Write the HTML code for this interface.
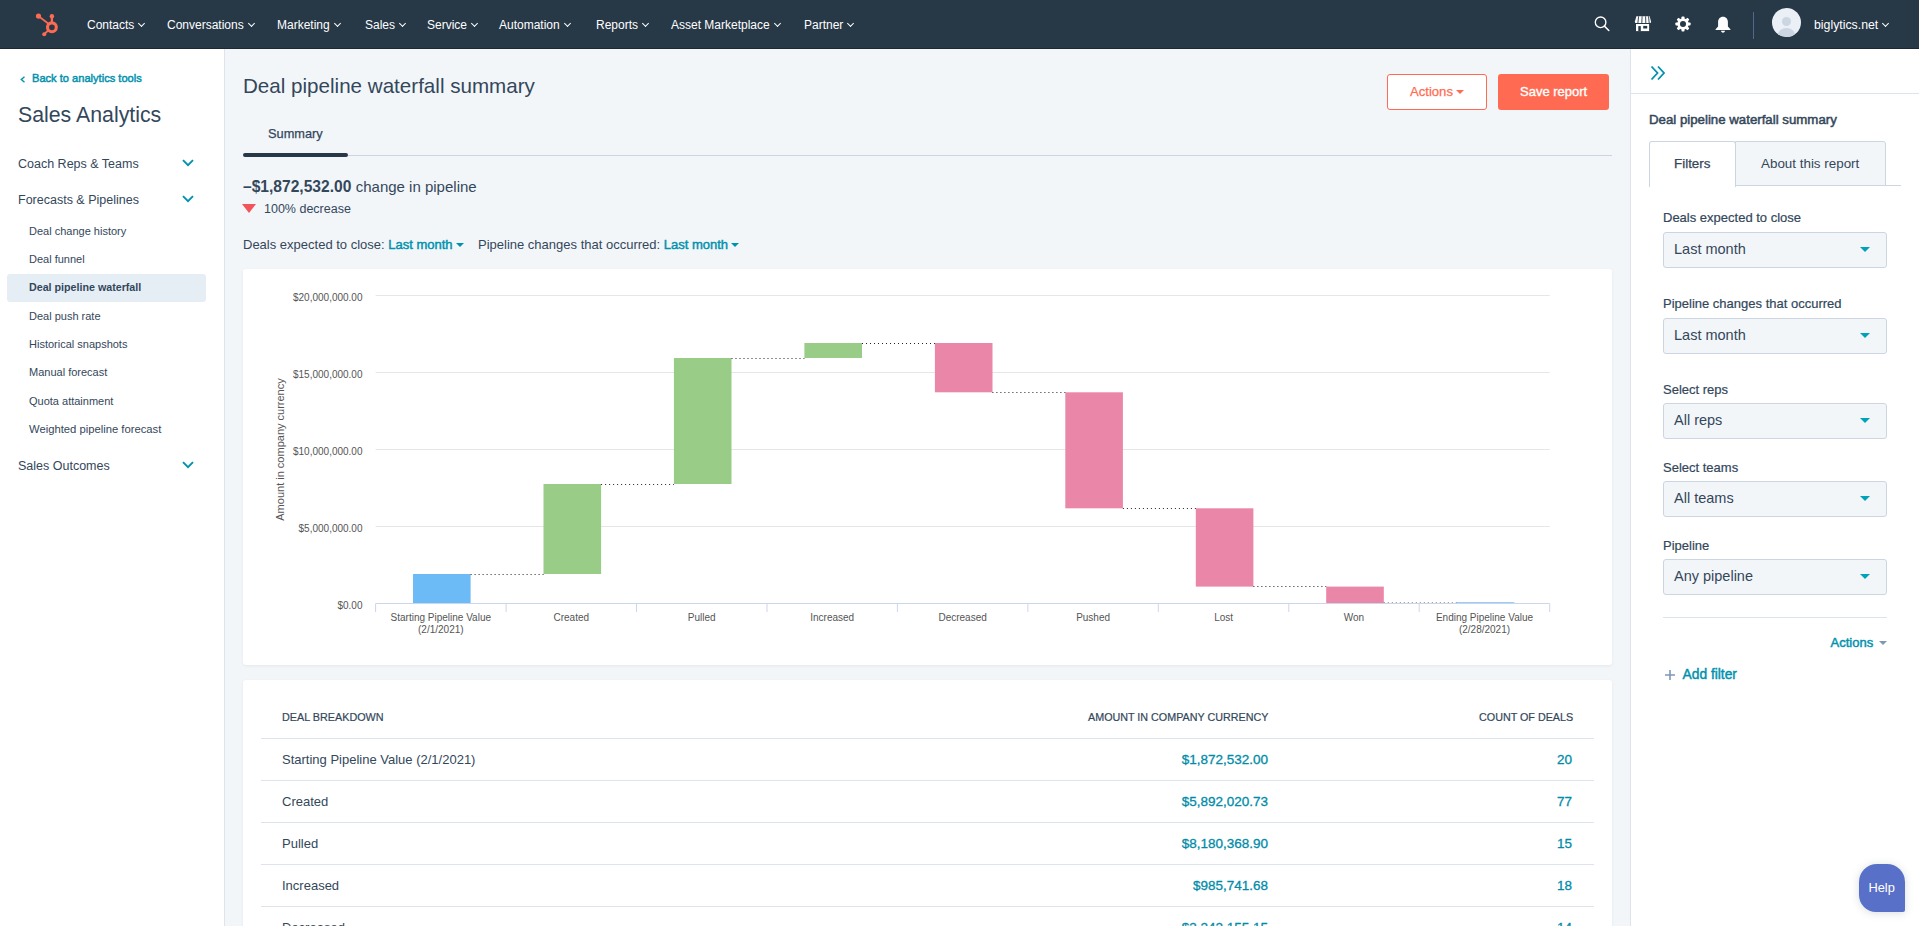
<!DOCTYPE html>
<html><head><meta charset="utf-8">
<style>
*{box-sizing:border-box;margin:0;padding:0}
html,body{width:1919px;height:926px;overflow:hidden}
body{position:relative;background:#f3f6f9;font-family:"Liberation Sans",sans-serif;color:#33475b}
.a{position:absolute;white-space:nowrap}
.demi{-webkit-text-stroke:0.25px currentColor}
#nav{position:absolute;left:0;top:0;width:1919px;height:49px;background:#273847;border-bottom:1px solid #1c2833}
.ni{position:absolute;top:16.5px;font-size:12px;line-height:16px;color:#fff}
.chev{display:inline-block;width:5px;height:5px;border-right:1px solid #fff;border-bottom:1px solid #fff;transform:rotate(45deg);margin-left:5px;position:relative;top:-3px}
#side{position:absolute;left:0;top:49px;width:225px;height:877px;background:#fff;border-right:1px solid #dfe3eb}
#right{position:absolute;left:1630px;top:49px;width:289px;height:877px;background:#fff;border-left:1px solid #dfe3eb}
.sec{position:absolute;left:18px;font-size:12.5px;line-height:18px;color:#33475b}
.tchev{position:absolute;left:183px;width:8px;height:8px;border-right:2px solid #0091ae;border-bottom:2px solid #0091ae;transform:rotate(45deg)}
.sub{position:absolute;left:29px;font-size:11px;line-height:16px;color:#33475b}
.card{position:absolute;background:#fff;border-radius:3px;box-shadow:0 1px 3px rgba(45,62,80,.08)}
.lbl{position:absolute;left:1663px;font-size:13px;line-height:18px;color:#33475b;-webkit-text-stroke:0.2px #33475b}
.sel{position:absolute;left:1663px;width:224px;height:36px;background:#f3f6f9;border:1px solid #cbd6e2;border-radius:3px}
.sel span{position:absolute;left:10px;top:7px;font-size:14.5px;line-height:18px;color:#33475b}
.sel i{position:absolute;left:196px;top:14px;width:0;height:0;border-left:5.3px solid transparent;border-right:5.3px solid transparent;border-top:5.5px solid #00a1bb}
.row{position:absolute;left:261px;width:1333px;height:42px;border-top:1px solid #dfe3eb}
.row .n{position:absolute;left:21px;top:12px;font-size:13px;line-height:18px}
.row .v{position:absolute;right:326px;top:12px;font-size:13.5px;line-height:18px;color:#008ba8;-webkit-text-stroke:0.3px #008ba8}
.row .c{position:absolute;right:22px;top:12px;font-size:13.5px;line-height:18px;color:#008ba8;-webkit-text-stroke:0.3px #008ba8}
</style></head>
<body>
<!-- NAV -->
<div id="nav">
  <svg class="a" style="left:32px;top:10px" width="30" height="30" viewBox="0 0 30 30">
    <g fill="#ff6b52" stroke="#ff6b52" stroke-linecap="round">
      <circle cx="19.9" cy="17.3" r="4.4" fill="none" stroke-width="3.1"/>
      <line x1="6.5" y1="6.1" x2="16.5" y2="13.8" stroke-width="1.8"/>
      <circle cx="6.5" cy="6.1" r="2.6" stroke="none"/>
      <line x1="19.9" y1="6.2" x2="19.9" y2="12" stroke-width="2.2"/>
      <circle cx="19.9" cy="6.2" r="2.2" stroke="none"/>
      <line x1="12.2" y1="24.3" x2="16.3" y2="20.4" stroke-width="1.9"/>
      <circle cx="12.2" cy="24.3" r="2.0" stroke="none"/>
    </g>
  </svg>
  <div class="ni" style="left:87px">Contacts<i class="chev"></i></div>
  <div class="ni" style="left:167px">Conversations<i class="chev"></i></div>
  <div class="ni" style="left:277px">Marketing<i class="chev"></i></div>
  <div class="ni" style="left:365px">Sales<i class="chev"></i></div>
  <div class="ni" style="left:427px">Service<i class="chev"></i></div>
  <div class="ni" style="left:499px">Automation<i class="chev"></i></div>
  <div class="ni" style="left:596px">Reports<i class="chev"></i></div>
  <div class="ni" style="left:671px">Asset Marketplace<i class="chev"></i></div>
  <div class="ni" style="left:804px">Partner<i class="chev"></i></div>
  <!-- search -->
  <svg class="a" style="left:1592px;top:14px" width="20" height="20" viewBox="0 0 20 20"><circle cx="8.6" cy="8.3" r="5.3" fill="none" stroke="#fff" stroke-width="1.35"/><line x1="12.4" y1="12.1" x2="16.8" y2="16.5" stroke="#fff" stroke-width="1.5" stroke-linecap="round"/></svg>
  <!-- marketplace -->
  <svg class="a" style="left:1634px;top:16px" width="18" height="16" viewBox="0 0 18 16"><path d="M2.4 0.3H15.6L17.1 5.8Q17.1 7 16 7H1.8Q0.8 7 0.8 5.8Z" fill="#fff"/><path d="M4.6 0.3L3.9 7M8.1 0.3L7.8 7M11.6 0.3L11.8 7M14.5 0.3L15.2 7" stroke="#273847" stroke-width="0.9"/><rect x="2" y="8" width="13.1" height="7.1" fill="#fff"/><rect x="4.3" y="10.1" width="2.5" height="5.1" fill="#273847"/><rect x="9.2" y="9.9" width="4" height="2.6" fill="#273847"/></svg>
  <!-- gear -->
  <svg class="a" style="left:1675px;top:16.4px" width="16" height="16" viewBox="0 0 16 16"><g fill="#fff"><circle cx="8" cy="8" r="5.7"/><rect x="6.5" y="0.4" width="3" height="15.2" rx="0.8"/><rect x="6.5" y="0.4" width="3" height="15.2" rx="0.8" transform="rotate(45 8 8)"/><rect x="6.5" y="0.4" width="3" height="15.2" rx="0.8" transform="rotate(90 8 8)"/><rect x="6.5" y="0.4" width="3" height="15.2" rx="0.8" transform="rotate(135 8 8)"/></g><circle cx="8" cy="8" r="3.0" fill="#273847"/></svg>
  <!-- bell -->
  <svg class="a" style="left:1715px;top:16px" width="16" height="17" viewBox="0 0 16 17"><path d="M8 0.8c-3.2 0-4.9 2.4-4.9 5.5v4.2L0.6 13.2v0.9h14.8v-0.9l-2.5-2.7V6.3C12.9 3.2 11.2 0.8 8 0.8z" fill="#fff"/><path d="M6 14.8h4c0 1.1-0.9 1.9-2 1.9s-2-0.8-2-1.9z" fill="#fff"/></svg>
  <div class="a" style="left:1753px;top:12px;width:1px;height:27px;background:#4f6a8a"></div>
  <!-- avatar -->
  <div class="a" style="left:1772px;top:8px;width:29px;height:29px;border-radius:50%;background:#eaf0f6;overflow:hidden">
    <div class="a" style="left:10px;top:9px;width:9px;height:9px;border-radius:50%;background:#cbd6e2"></div>
    <div class="a" style="left:6px;top:20px;width:17px;height:14px;border-radius:50%;background:#cbd6e2"></div>
  </div>
  <div class="ni" style="left:1814px;top:16.5px;font-size:12.3px">biglytics.net<i class="chev"></i></div>
</div>

<!-- LEFT SIDEBAR -->
<div id="side"></div>
<svg class="a" style="left:20px;top:76px" width="6" height="7" viewBox="0 0 6 7"><path d="M4.5 0.8L1.3 3.5L4.5 6.2" fill="none" stroke="#0091ae" stroke-width="1.4"/></svg>
<div class="a demi" style="left:32px;top:70px;font-size:11.1px;line-height:16px;color:#0091ae;-webkit-text-stroke:0.45px #0091ae">Back to analytics tools</div>
<div class="a" style="left:18px;top:102px;font-size:21.3px;line-height:26px;color:#33475b">Sales Analytics</div>
<div class="sec" style="top:155px">Coach Reps &amp; Teams</div><svg class="a" style="left:182px;top:159px" width="12" height="8" viewBox="0 0 12 8"><path d="M1 1.2L6 6.2L11 1.2" fill="none" stroke="#0091ae" stroke-width="1.9"/></svg>
<div class="sec" style="top:191px">Forecasts &amp; Pipelines</div><svg class="a" style="left:182px;top:195px" width="12" height="8" viewBox="0 0 12 8"><path d="M1 1.2L6 6.2L11 1.2" fill="none" stroke="#0091ae" stroke-width="1.9"/></svg>
<div class="sub" style="top:223px">Deal change history</div>
<div class="sub" style="top:251px">Deal funnel</div>
<div class="a" style="left:7px;top:274px;width:199px;height:28px;background:#e6eef5;border-radius:3px"></div>
<div class="sub" style="top:279px;font-size:10.7px;font-weight:700">Deal pipeline waterfall</div>
<div class="sub" style="top:308px">Deal push rate</div>
<div class="sub" style="top:336px">Historical snapshots</div>
<div class="sub" style="top:364px">Manual forecast</div>
<div class="sub" style="top:393px">Quota attainment</div>
<div class="sub" style="top:421px;font-size:11.25px">Weighted pipeline forecast</div>
<div class="sec" style="top:457px">Sales Outcomes</div><svg class="a" style="left:182px;top:461px" width="12" height="8" viewBox="0 0 12 8"><path d="M1 1.2L6 6.2L11 1.2" fill="none" stroke="#0091ae" stroke-width="1.9"/></svg>

<!-- MAIN HEADER -->
<div class="a" style="left:243px;top:74px;font-size:20.6px;line-height:24px;color:#33475b">Deal pipeline waterfall summary</div>
<div class="a" style="left:1387px;top:74px;width:100px;height:36px;border:1px solid #ff6b52;border-radius:3px;background:#fff"></div>
<div class="a demi" style="left:1410px;top:83px;font-size:13.1px;line-height:18px;color:#ff6b52;-webkit-text-stroke:0.25px #ff6b52">Actions</div>
<div class="a" style="left:1456px;top:90px;width:0;height:0;border-left:4px solid transparent;border-right:4px solid transparent;border-top:4px solid #ff6b52"></div>
<div class="a" style="left:1498px;top:74px;width:111px;height:36px;border-radius:3px;background:#ff6b52"></div>
<div class="a" style="left:1520px;top:83px;font-size:13px;line-height:18px;color:#fff;-webkit-text-stroke:0.35px #fff">Save report</div>

<div class="a demi" style="left:268px;top:125px;font-size:12.8px;line-height:18px;color:#33475b">Summary</div>
<div class="a" style="left:243px;top:155px;width:1369px;height:1px;background:#cbd6e2"></div>
<div class="a" style="left:243px;top:153px;width:105px;height:4px;border-radius:2px;background:#273847"></div>

<div class="a" style="left:243px;top:177px;font-size:15.5px;line-height:19px;color:#33475b"><b style="font-size:15.6px">–$1,872,532.00</b> <span style="font-size:15px">change in pipeline</span></div>
<div class="a" style="left:242px;top:204px;width:0;height:0;border-left:7px solid transparent;border-right:7px solid transparent;border-top:9px solid #f2545b"></div>
<div class="a" style="left:264px;top:201px;font-size:12.5px;line-height:17px;color:#33475b">100% decrease</div>

<div class="a" style="left:243px;top:236px;font-size:13px;line-height:18px;color:#33475b">Deals expected to close: <span style="color:#0091ae;-webkit-text-stroke:0.45px #0091ae">Last month</span></div>
<div class="a" style="left:455.5px;top:243px;width:0;height:0;border-left:4px solid transparent;border-right:4px solid transparent;border-top:4px solid #0091ae"></div>
<div class="a" style="left:478px;top:236px;font-size:13px;line-height:18px;color:#33475b">Pipeline changes that occurred: <span style="color:#0091ae;-webkit-text-stroke:0.45px #0091ae">Last month</span></div>
<div class="a" style="left:730.5px;top:243px;width:0;height:0;border-left:4px solid transparent;border-right:4px solid transparent;border-top:4px solid #0091ae"></div>

<!-- CHART CARD -->
<div class="card" style="left:243px;top:269px;width:1369px;height:396px"></div>
<svg class="a" style="left:0;top:0" width="1919" height="926" id="chart" font-family="Liberation Sans, sans-serif">
<line x1="375.6" y1="295.5" x2="1549.7" y2="295.5" stroke="#e6e6e6" stroke-width="1"/>
<line x1="375.6" y1="372.5" x2="1549.7" y2="372.5" stroke="#e6e6e6" stroke-width="1"/>
<line x1="375.6" y1="449.5" x2="1549.7" y2="449.5" stroke="#e6e6e6" stroke-width="1"/>
<line x1="375.6" y1="526.5" x2="1549.7" y2="526.5" stroke="#e6e6e6" stroke-width="1"/>
<text x="362.5" y="301.4" text-anchor="end" font-size="10" fill="#555">$20,000,000.00</text>
<text x="362.5" y="378.4" text-anchor="end" font-size="10" fill="#555">$15,000,000.00</text>
<text x="362.5" y="455.4" text-anchor="end" font-size="10" fill="#555">$10,000,000.00</text>
<text x="362.5" y="532.4" text-anchor="end" font-size="10" fill="#555">$5,000,000.00</text>
<text x="362.5" y="609.4" text-anchor="end" font-size="10" fill="#555">$0.00</text>
<text transform="translate(283.5 449.5) rotate(-90)" text-anchor="middle" font-size="11" fill="#555">Amount in company currency</text>
<rect x="413.0" y="574" width="57.6" height="29.5" fill="#6cbaf6"/>
<rect x="543.5" y="484" width="57.6" height="90.0" fill="#98cc87"/>
<rect x="673.9" y="358" width="57.6" height="126.0" fill="#98cc87"/>
<rect x="804.4" y="343" width="57.6" height="15.0" fill="#98cc87"/>
<rect x="934.9" y="343" width="57.6" height="49.3" fill="#ea86a7"/>
<rect x="1065.3" y="392.3" width="57.6" height="116.0" fill="#ea86a7"/>
<rect x="1195.8" y="508.3" width="57.6" height="78.3" fill="#ea86a7"/>
<rect x="1326.2" y="586.6" width="57.6" height="16.9" fill="#ea86a7"/>
<rect x="1456.7" y="602.3" width="57.6" height="1.2" fill="#6cbaf6"/>
<line x1="470.6" y1="574.5" x2="543.5" y2="574.5" stroke="#222" stroke-width="1" stroke-dasharray="1,3"/>
<line x1="601.1" y1="484.5" x2="673.9" y2="484.5" stroke="#222" stroke-width="1" stroke-dasharray="1,3"/>
<line x1="731.5" y1="358.5" x2="804.4" y2="358.5" stroke="#222" stroke-width="1" stroke-dasharray="1,3"/>
<line x1="862.0" y1="343.5" x2="934.9" y2="343.5" stroke="#222" stroke-width="1" stroke-dasharray="1,3"/>
<line x1="992.4" y1="392.5" x2="1065.3" y2="392.5" stroke="#222" stroke-width="1" stroke-dasharray="1,3"/>
<line x1="1122.9" y1="508.5" x2="1195.8" y2="508.5" stroke="#222" stroke-width="1" stroke-dasharray="1,3"/>
<line x1="1253.4" y1="586.5" x2="1326.2" y2="586.5" stroke="#222" stroke-width="1" stroke-dasharray="1,3"/>
<line x1="1383.8" y1="603" x2="1456.7" y2="603" stroke="#222" stroke-width="1" stroke-dasharray="1,3"/>
<line x1="375.6" y1="603.5" x2="1549.7" y2="603.5" stroke="#ccd6eb" stroke-width="1"/>
<line x1="375.6" y1="603.5" x2="375.6" y2="612" stroke="#ccd6eb" stroke-width="1"/>
<line x1="506.1" y1="603.5" x2="506.1" y2="612" stroke="#ccd6eb" stroke-width="1"/>
<line x1="636.5" y1="603.5" x2="636.5" y2="612" stroke="#ccd6eb" stroke-width="1"/>
<line x1="767.0" y1="603.5" x2="767.0" y2="612" stroke="#ccd6eb" stroke-width="1"/>
<line x1="897.4" y1="603.5" x2="897.4" y2="612" stroke="#ccd6eb" stroke-width="1"/>
<line x1="1027.9" y1="603.5" x2="1027.9" y2="612" stroke="#ccd6eb" stroke-width="1"/>
<line x1="1158.3" y1="603.5" x2="1158.3" y2="612" stroke="#ccd6eb" stroke-width="1"/>
<line x1="1288.8" y1="603.5" x2="1288.8" y2="612" stroke="#ccd6eb" stroke-width="1"/>
<line x1="1419.2" y1="603.5" x2="1419.2" y2="612" stroke="#ccd6eb" stroke-width="1"/>
<line x1="1549.7" y1="603.5" x2="1549.7" y2="612" stroke="#ccd6eb" stroke-width="1"/>
<text x="440.8" y="620.6" text-anchor="middle" font-size="10" fill="#555">Starting Pipeline Value</text>
<text x="440.8" y="632.8" text-anchor="middle" font-size="10" fill="#555">(2/1/2021)</text>
<text x="571.3" y="620.6" text-anchor="middle" font-size="10" fill="#555">Created</text>
<text x="701.7" y="620.6" text-anchor="middle" font-size="10" fill="#555">Pulled</text>
<text x="832.2" y="620.6" text-anchor="middle" font-size="10" fill="#555">Increased</text>
<text x="962.6" y="620.6" text-anchor="middle" font-size="10" fill="#555">Decreased</text>
<text x="1093.1" y="620.6" text-anchor="middle" font-size="10" fill="#555">Pushed</text>
<text x="1223.6" y="620.6" text-anchor="middle" font-size="10" fill="#555">Lost</text>
<text x="1354.0" y="620.6" text-anchor="middle" font-size="10" fill="#555">Won</text>
<text x="1484.5" y="620.6" text-anchor="middle" font-size="10" fill="#555">Ending Pipeline Value</text>
<text x="1484.5" y="632.8" text-anchor="middle" font-size="10" fill="#555">(2/28/2021)</text>
</svg>

<!-- TABLE CARD -->
<div class="card" style="left:243px;top:680px;width:1369px;height:300px"></div>
<div class="a" style="left:282px;top:709px;font-size:10.8px;line-height:16px;color:#33475b;-webkit-text-stroke:0.2px #33475b">DEAL BREAKDOWN</div>
<div class="a" style="left:1088px;top:709px;font-size:10.75px;line-height:16px;color:#33475b;-webkit-text-stroke:0.2px #33475b">AMOUNT IN COMPANY CURRENCY</div>
<div class="a" style="left:1479px;top:709px;font-size:10.75px;line-height:16px;color:#33475b;-webkit-text-stroke:0.2px #33475b">COUNT OF DEALS</div>
<div class="row" style="top:738px"><span class="n">Starting Pipeline Value (2/1/2021)</span><span class="v">$1,872,532.00</span><span class="c">20</span></div>
<div class="row" style="top:780px"><span class="n">Created</span><span class="v">$5,892,020.73</span><span class="c">77</span></div>
<div class="row" style="top:822px"><span class="n">Pulled</span><span class="v">$8,180,368.90</span><span class="c">15</span></div>
<div class="row" style="top:864px"><span class="n">Increased</span><span class="v">$985,741.68</span><span class="c">18</span></div>
<div class="row" style="top:906px"><span class="n">Decreased</span><span class="v">$3,242,155.15</span><span class="c">14</span></div>

<!-- RIGHT PANEL -->
<div id="right"></div>
<svg class="a" style="left:1650px;top:65px" width="16" height="16" viewBox="0 0 16 16"><path d="M1.5 1.5L7.5 8L1.5 14.5M8 1.5L14 8L8 14.5" fill="none" stroke="#0091ae" stroke-width="1.8"/></svg>
<div class="a" style="left:1631px;top:93px;width:288px;height:1px;background:#dfe3eb"></div>
<div class="a" style="left:1649px;top:111px;font-size:13.25px;line-height:18px;color:#33475b;-webkit-text-stroke:0.5px #33475b">Deal pipeline waterfall summary</div>
<div class="a" style="left:1649px;top:141px;width:87px;height:46px;background:#fff;border:1px solid #cbd6e2;border-bottom:none;border-radius:3px 3px 0 0"></div>
<div class="a" style="left:1735px;top:141px;width:151px;height:45px;background:#f3f6f9;border:1px solid #cbd6e2;border-radius:0 3px 0 0"></div>
<div class="a" style="left:1886px;top:185px;width:15px;height:1px;background:#cbd6e2"></div>
<div class="a demi" style="left:1674px;top:155px;font-size:13.4px;line-height:18px;color:#33475b">Filters</div>
<div class="a" style="left:1761px;top:155px;font-size:13.4px;line-height:18px;color:#33475b">About this report</div>

<div class="lbl" style="top:209px">Deals expected to close</div>
<div class="sel" style="top:232px"><span>Last month</span><i></i></div>
<div class="lbl" style="top:295px">Pipeline changes that occurred</div>
<div class="sel" style="top:318px"><span>Last month</span><i></i></div>
<div class="lbl" style="top:381px">Select reps</div>
<div class="sel" style="top:403px"><span>All reps</span><i></i></div>
<div class="lbl" style="top:459px">Select teams</div>
<div class="sel" style="top:481px"><span>All teams</span><i></i></div>
<div class="lbl" style="top:537px">Pipeline</div>
<div class="sel" style="top:559px"><span>Any pipeline</span><i></i></div>
<div class="a" style="left:1663px;top:617px;width:224px;height:1px;background:#dfe3eb"></div>
<div class="a" style="left:1830.5px;top:634px;font-size:13px;line-height:18px;color:#0091ae;-webkit-text-stroke:0.45px #0091ae">Actions</div>
<div class="a" style="left:1879px;top:641px;width:0;height:0;border-left:4px solid transparent;border-right:4px solid transparent;border-top:4px solid #7c98b6"></div>
<svg class="a" style="left:1664px;top:669px" width="12" height="12" viewBox="0 0 12 12"><path d="M6 1v10M1 6h10" stroke="#7c98b6" stroke-width="1.6"/></svg>
<div class="a" style="left:1682.5px;top:666px;font-size:13.8px;line-height:18px;color:#0091ae;-webkit-text-stroke:0.45px #0091ae">Add filter</div>
<div class="a" style="left:1859px;top:864px;width:46px;height:48px;background:#5870c8;border-radius:18px 18px 2px 17px;box-shadow:0 1px 8px rgba(45,62,80,.18)"></div>
<div class="a" style="left:1868.5px;top:879px;font-size:12.8px;line-height:18px;color:#fff">Help</div>
</body></html>
